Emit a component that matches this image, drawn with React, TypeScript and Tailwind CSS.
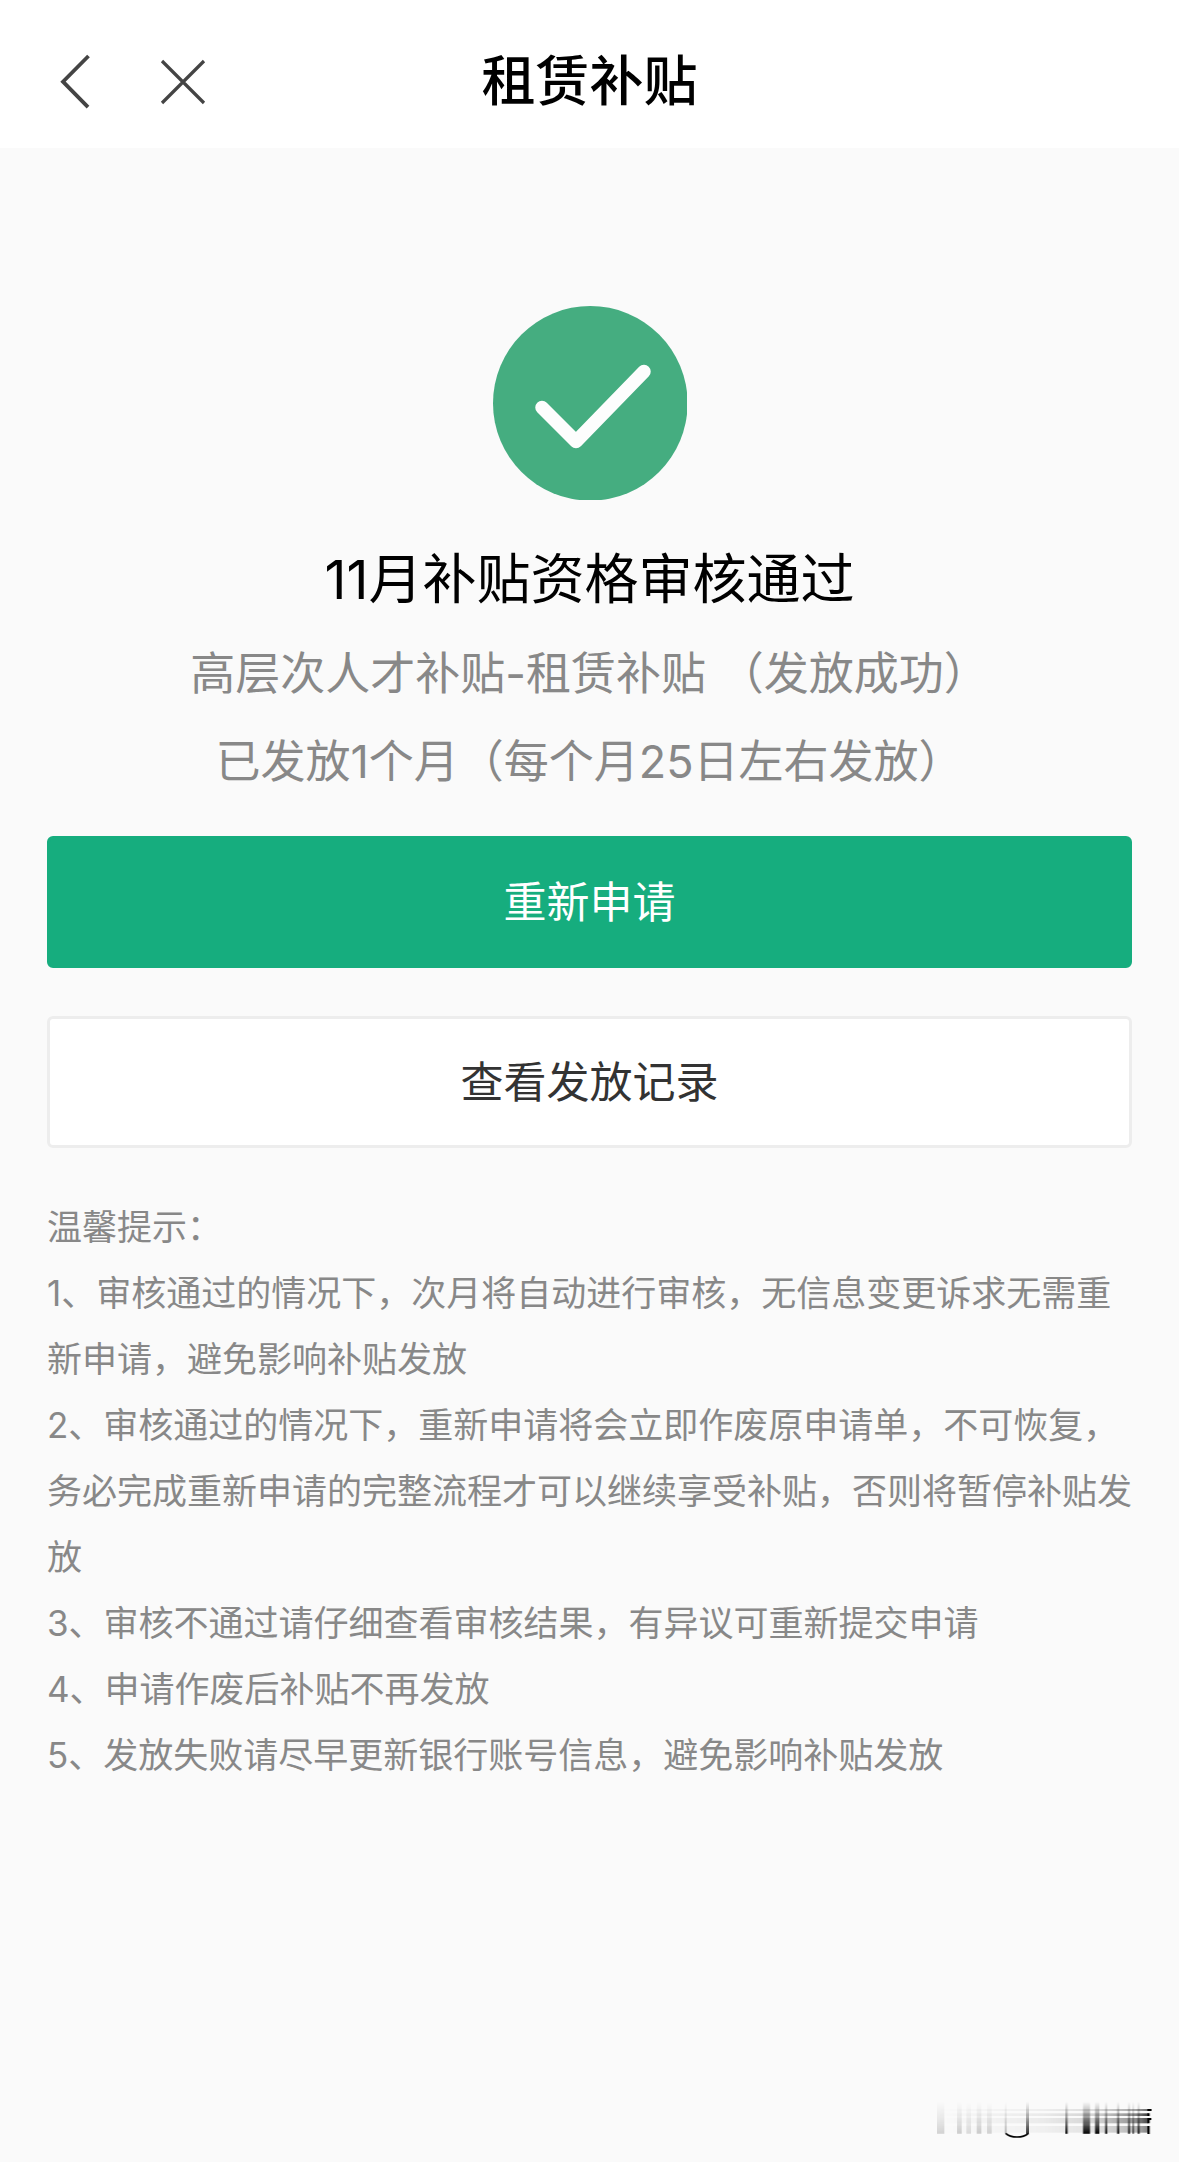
import type { ReactNode } from 'react';

const tips = [
  '1、审核通过的情况下，次月将自动进行审核，无信息变更诉求无需重新申请，避免影响补贴发放',
  '2、审核通过的情况下，重新申请将会立即作废原申请单，不可恢复，务必完成重新申请的完整流程才可以继续享受补贴，否则将暂停补贴发放',
  '3、审核不通过请仔细查看审核结果，有异议可重新提交申请',
  '4、申请作废后补贴不再发放',
  '5、发放失败请尽早更新银行账号信息，避免影响补贴发放',
];

// x, width, opacity
const bars = [
  [112, 22, 0.16],
  [172, 14, 0.18],
  [200, 14, 0.12],
  [231, 14, 0.18],
  [262, 14, 0.15],
  [315, 6, 0.25],
  [379, 9, 0.8],
  [497, 7, 0.95],
  [550, 21, 1],
  [586, 13, 1],
  [616, 7, 0.9],
  [652, 7, 0.9],
  [685, 6, 0.9],
  [698, 5, 0.7],
  [714, 6, 0.9],
];

// y, height, opacity
const streaks = [
  [117, 6, 0.6],
  [130, 8, 0.8],
  [144, 16, 0.75],
  [168, 20, 0.5],
];

const BackIcon = () => (
  <svg width="32" height="56" viewBox="0 0 32 56" fill="none" stroke="#444" strokeWidth="3.8">
    <path d="M28.5 2 3 27.7l25 25.5" />
  </svg>
);

const CloseIcon = () => (
  <svg width="46" height="46" viewBox="0 0 46 46" fill="none" stroke="#444" strokeWidth="3.2">
    <path d="M2 2l42 42M44 2 2 44" />
  </svg>
);

const SuccessIcon = () => (
  <svg width="194" height="194" viewBox="0 0 194 194" fill="none">
    <circle cx="97.3" cy="97.3" r="97.3" fill="#45ad80" />
    <path
      d="M49 101.5 83 135.5 151 65.5"
      stroke="#fdfdfd"
      strokeWidth="13.5"
      strokeLinecap="round"
      strokeLinejoin="round"
    />
  </svg>
);

const Watermark = () => (
  <svg width="220" height="40" viewBox="100 90 660 120" aria-hidden="true">
    <defs>
      <linearGradient id="fade-down" x1="0" y1="95" x2="0" y2="192" gradientUnits="userSpaceOnUse">
        <stop offset="0" stopColor="#000" stopOpacity="0" />
        <stop offset="0.5" stopColor="#000" stopOpacity="0.4" />
        <stop offset="1" stopColor="#000" stopOpacity="1" />
      </linearGradient>
      <linearGradient id="fade-right" x1="110" y1="0" x2="750" y2="0" gradientUnits="userSpaceOnUse">
        <stop offset="0" stopColor="#000" stopOpacity="0" />
        <stop offset="0.5" stopColor="#000" stopOpacity="0.08" />
        <stop offset="0.75" stopColor="#000" stopOpacity="0.2" />
        <stop offset="0.93" stopColor="#000" stopOpacity="0.55" />
        <stop offset="1" stopColor="#000" stopOpacity="1" />
      </linearGradient>
      <filter id="soft-x" x="-5%" y="0" width="110%" height="100%">
        <feGaussianBlur stdDeviation="2 0" />
      </filter>
      <filter id="soft-y" x="0" y="-10%" width="100%" height="120%">
        <feGaussianBlur stdDeviation="0 2" />
      </filter>
    </defs>
    <g filter="url(#soft-x)">
      {bars.map(([x, width, opacity]) => (
        <rect key={x} x={x} y="95" width={width} height="97" opacity={opacity} fill="url(#fade-down)" />
      ))}
    </g>
    <g filter="url(#soft-y)">
      {streaks.map(([y, height, opacity]) => (
        <rect key={y} x="110" y={y} width="636" height={height} opacity={opacity} fill="url(#fade-right)" />
      ))}
    </g>
    <path d="M318 190q12 11 34 11t34-11" fill="none" stroke="#000" strokeWidth="5" />
    <path d="M743 117h13v6h-13zM743 130h7v8h-7zM743 144h12v6h-5v10h-7zM743 168h7v24h-7z" fill="#000" />
  </svg>
);

interface ActionButtonProps {
  children: ReactNode;
  primary?: boolean;
}

const ActionButton = ({ children, primary }: ActionButtonProps) => (
  <button
    type="button"
    className={
      primary
        ? 'w-full rounded-md border-3 border-[#16ad7e] bg-[#16ad7e] py-8 text-[43px] leading-[62px] text-white'
        : 'w-full rounded-md border-3 border-[#ededed] bg-white py-8 text-[43px] leading-[62px] text-[#333]'
    }
  >
    {children}
  </button>
);

export default function App() {
  return (
    <div className="flex min-h-screen flex-col bg-[#fafafa] font-['Inter','Noto_Sans_CJK_SC',sans-serif]">
      <header className="grid grid-cols-[1fr_auto_1fr] items-center bg-white px-[60px] pt-10 pb-6">
        <div className="flex items-center gap-[68px]">
          <button type="button" aria-label="返回">
            <BackIcon />
          </button>
          <button type="button" aria-label="关闭">
            <CloseIcon />
          </button>
        </div>
        <h1 className="text-[54px] leading-[84px] font-medium text-black">租赁补贴</h1>
      </header>

      <main className="flex flex-1 flex-col px-[47px] pt-[158px]">
        {/* Resultado de la revisión */}
        <section className="flex flex-col items-center text-center">
          <SuccessIcon />
          <h2 className="mt-[42px] mb-3 text-[54px] leading-[76px] text-black">11月补贴资格审核通过</h2>
          <p className="text-[45px] leading-[88px] text-[#888]">高层次人才补贴-租赁补贴 （发放成功）</p>
          <p className="text-[45px] leading-[88px] text-[#888]">已发放1个月（每个月25日左右发放）</p>
        </section>

        <div className="mt-[30px] flex flex-col gap-12">
          <ActionButton primary>重新申请</ActionButton>
          <ActionButton>查看发放记录</ActionButton>
        </div>

        <section className="mt-[46px] text-[35px] leading-[66px] text-[#888]">
          <h3>温馨提示：</h3>
          {tips.map((tip) => (
            <p key={tip}>{tip}</p>
          ))}
        </section>
      </main>

      <footer className="flex justify-end px-[26px] pb-[22px]">
        <Watermark />
      </footer>
    </div>
  );
}
